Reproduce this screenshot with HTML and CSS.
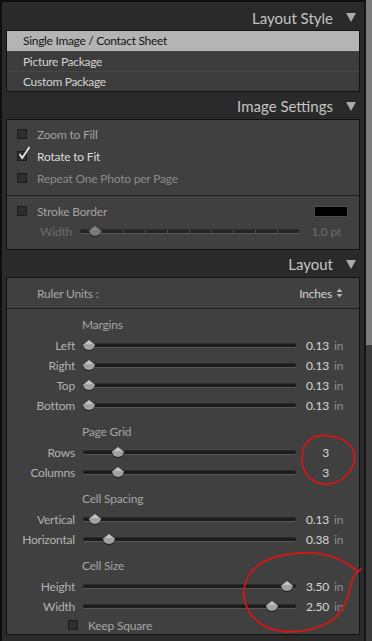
FILE: index.html
```html
<!DOCTYPE html>
<html lang="en">
  <head>
    <meta charset="UTF-8" />
    <meta name="viewport" content="width=device-width, initial-scale=1.0" />
    <title>Print Module</title>
    <link rel="stylesheet" href="styles.css">
  </head>
  <body>
    <div class="window">
      <div class="panel">
        <div class="head first">Layout Style <span class="tri"></span></div>
        <ul class="box list">
          <li class="sel">Single Image / Contact Sheet</li>
          <li>Picture Package</li>
          <li>Custom Package</li>
        </ul>

        <div class="head">Image Settings <span class="tri"></span></div>
        <div class="box">
          <div class="sect checks">
            <div class="check"><span class="cb"></span>Zoom to Fill</div>
            <div class="check on">
              <span class="cb">
                <svg class="tick" width="13" height="14" viewBox="0 0 13 14"><path d="M1.5 8 L4.2 12 L11.5 1" fill="none" stroke="#f0f0f0" stroke-width="1.6"/></svg>
              </span>Rotate to Fit
            </div>
            <div class="check dim"><span class="cb"></span>Repeat One Photo per Page</div>
          </div>
          <div class="sect stroke">
            <div class="check"><span class="cb"></span>Stroke Border<span class="swatch"></span></div>
            <div class="srow off">
              <span class="lab">Width</span>
              <div class="track ticks"><span class="thumb" style="left:9px"></span></div>
              <span class="val">1.0 pt</span>
            </div>
          </div>
        </div>

        <div class="head">Layout <span class="tri"></span></div>
        <div class="box">
          <div class="sect ruler">
            <span>Ruler Units :</span>
            <span class="units">Inches
              <svg width="7" height="10" viewBox="0 0 7 10"><path d="M3.5 0.5 L6.5 4 L0.5 4 Z M3.5 9.5 L6.5 6 L0.5 6 Z" fill="#b4b4b4"/></svg>
            </span>
          </div>
          <div class="sect sliders">
            <div class="group">Margins</div>
            <div class="srow"><span class="lab">Left</span><div class="track"><span class="thumb" style="left:0px"></span></div><span class="val">0.13</span><span class="unit">in</span></div>
            <div class="srow"><span class="lab">Right</span><div class="track"><span class="thumb" style="left:0px"></span></div><span class="val">0.13</span><span class="unit">in</span></div>
            <div class="srow"><span class="lab">Top</span><div class="track"><span class="thumb" style="left:0px"></span></div><span class="val">0.13</span><span class="unit">in</span></div>
            <div class="srow"><span class="lab">Bottom</span><div class="track"><span class="thumb" style="left:0px"></span></div><span class="val">0.13</span><span class="unit">in</span></div>

            <div class="group">Page Grid</div>
            <div class="srow"><span class="lab">Rows</span><div class="track"><span class="thumb" style="left:29px"></span></div><span class="val">3</span><span class="unit"></span></div>
            <div class="srow"><span class="lab">Columns</span><div class="track"><span class="thumb" style="left:29px"></span></div><span class="val">3</span><span class="unit"></span></div>

            <div class="group">Cell Spacing</div>
            <div class="srow"><span class="lab">Vertical</span><div class="track"><span class="thumb" style="left:6px"></span></div><span class="val">0.13</span><span class="unit">in</span></div>
            <div class="srow"><span class="lab">Horizontal</span><div class="track"><span class="thumb" style="left:20px"></span></div><span class="val">0.38</span><span class="unit">in</span></div>

            <div class="group">Cell Size</div>
            <div class="srow"><span class="lab">Height</span><div class="track"><span class="thumb" style="left:198px"></span></div><span class="val">3.50</span><span class="unit">in</span></div>
            <div class="srow"><span class="lab">Width</span><div class="track"><span class="thumb" style="left:183px"></span></div><span class="val">2.50</span><span class="unit">in</span></div>
            <div class="check keep"><span class="cb"></span>Keep Square</div>
          </div>
        </div>
      </div>
      <div class="divider"></div>
      <div class="scroll"><div class="bar"></div></div>

      <svg class="marks" width="372" height="641" viewBox="0 0 372 641">
        <path d="M313 437 C331 432 350 440 354 452 C357 466 346 482 329 484 C313 486 302 473 302 459 C302 447 306 440 316 436" />
        <path d="M358 572 C352 566 341 557 321 554 C296 550 263 556 251 572 C238 590 243 615 266 627 C289 636 319 631 335 618 C347 606 350 590 352 580 C354 575 357 572 361 569" />
      </svg>
    </div>
  </body>
</html>
```

FILE: styles.css
```css
body {
  margin: 0;
  background: #262626;
  font-family: Lato, "Open Sans", sans-serif;
}
.window {
  position: relative;
  display: flex;
  width: 372px;
  height: 641px;
  overflow: hidden;
}
.panel {
  width: 362px;
  background: #2a2a2a;
  border-left: 2px solid #0e0e0e;
  border-top: 2px solid #0e0e0e;
}
.divider {
  width: 2px;
  background: #151515;
}
.scroll {
  flex: 1;
  background: #3b3b3b;
}
.scroll .bar {
  height: 345px;
  background: #7d7d7d;
}

/* section headers */
.head {
  height: 27px;
  display: flex;
  align-items: center;
  justify-content: flex-end;
  gap: 13px;
  padding: 1px 8px 0 0;
  box-sizing: border-box;
  font-size: 15px;
  color: #c4c4c4;
}
.head.first {
  height: 28px;
  padding-top: 3px;
}
.tri {
  width: 0;
  height: 0;
  border-left: 5px solid transparent;
  border-right: 5px solid transparent;
  border-top: 9px solid #a9a9a9;
}

.box {
  margin: 0 4px;
  border: 1px solid #121212;
  background: #404040;
}

/* layout style list */
.list {
  list-style: none;
  padding: 0;
  background: #3c3c3c;
  font-size: 12px;
  letter-spacing: -0.3px;
  color: #d4d4d4;
}
.list li {
  height: 19px;
  line-height: 19px;
  padding-left: 16px;
  border-top: 1px solid #464646;
}
.list li:first-child {
  height: 20px;
  border-top: none;
}
.list li.sel {
  background: #b4b4b4;
  color: #161616;
}

.sect {
  border-top: 1px solid #1f1f1f;
}
.sect:first-child {
  border-top: none;
}

/* checkboxes */
.checks {
  padding: 3px 0 6px 10px;
}
.check {
  display: flex;
  align-items: center;
  height: 22px;
  font-size: 12px;
  letter-spacing: -0.2px;
  color: #a2a2a2;
}
.check.on {
  color: #dadada;
}
.check.dim {
  color: #8c8c8c;
}
.cb {
  position: relative;
  width: 8px;
  height: 8px;
  margin-right: 10px;
  background: #2e2e2e;
  border: 1px solid #1b1b1b;
  flex-shrink: 0;
}
.tick {
  position: absolute;
  left: 0;
  top: -6px;
}

.stroke {
  padding: 5px 0 8px 10px;
}
.stroke .check {
  height: 20px;
}
.swatch {
  width: 32px;
  height: 9px;
  margin-left: auto;
  margin-right: 11px;
  background: #000;
  border: 1px solid #4c4c4c;
}

/* slider rows */
.srow {
  display: flex;
  align-items: center;
  height: 20px;
  font-size: 12px;
  letter-spacing: -0.2px;
}
.lab {
  width: 68px;
  text-align: right;
  color: #b2b2b2;
}
.track {
  position: relative;
  width: 213px;
  height: 3px;
  margin-left: 8px;
  background: #1c1c1c;
  border-radius: 2px;
  box-shadow: 0 1px 0 #575757, 0 -1px 0 #2c2c2c;
}
.thumb {
  position: absolute;
  top: 0;
  width: 12px;
  height: 6px;
  background: #a2a2a2;
  border-radius: 0 0 6px 6px;
  box-shadow: 0 1px 0 #1e1e1e;
}
.thumb::before {
  content: "";
  position: absolute;
  left: 1px;
  bottom: 6px;
  border-left: 5px solid transparent;
  border-right: 5px solid transparent;
  border-bottom: 4px solid #c2c2c2;
}
.val {
  width: 33px;
  text-align: right;
  color: #d6d6d6;
}
.unit {
  margin-left: 5px;
  color: #8e8e8e;
}

.stroke .srow .lab {
  width: 55px;
  color: #6c6c6c;
}
.stroke .track {
  width: 220px;
  margin-left: 8px;
  background: #242424;
}
.stroke .track.ticks {
  background-image: repeating-linear-gradient(90deg, transparent 0 21px, #4e4e4e 21px 22px);
}
.stroke .thumb {
  background: #7a7a7a;
}
.stroke .thumb::before {
  border-bottom-color: #868686;
}
.stroke .val {
  width: 41px;
  color: #6c6c6c;
}

/* ruler units row */
.ruler {
  display: flex;
  justify-content: space-between;
  align-items: center;
  height: 30px;
  padding: 0 16px 0 30px;
  font-size: 12px;
  letter-spacing: -0.2px;
  color: #a8a8a8;
}
.units {
  display: flex;
  align-items: center;
  gap: 4px;
  color: #d4d4d4;
}

.sliders {
  padding-top: 6px;
}
.group {
  height: 20px;
  line-height: 20px;
  margin-top: 7px;
  padding-left: 75px;
  font-size: 12px;
  letter-spacing: -0.2px;
  color: #a4a4a4;
}
.group:first-child {
  margin-top: 0;
}
.check.keep {
  height: 18px;
  padding-left: 61px;
  color: #a6a6a6;
}

.marks {
  position: absolute;
  left: 0;
  top: 0;
  pointer-events: none;
}
.marks path {
  fill: none;
  stroke: #c8191c;
  stroke-width: 2;
  stroke-linecap: round;
}
```
